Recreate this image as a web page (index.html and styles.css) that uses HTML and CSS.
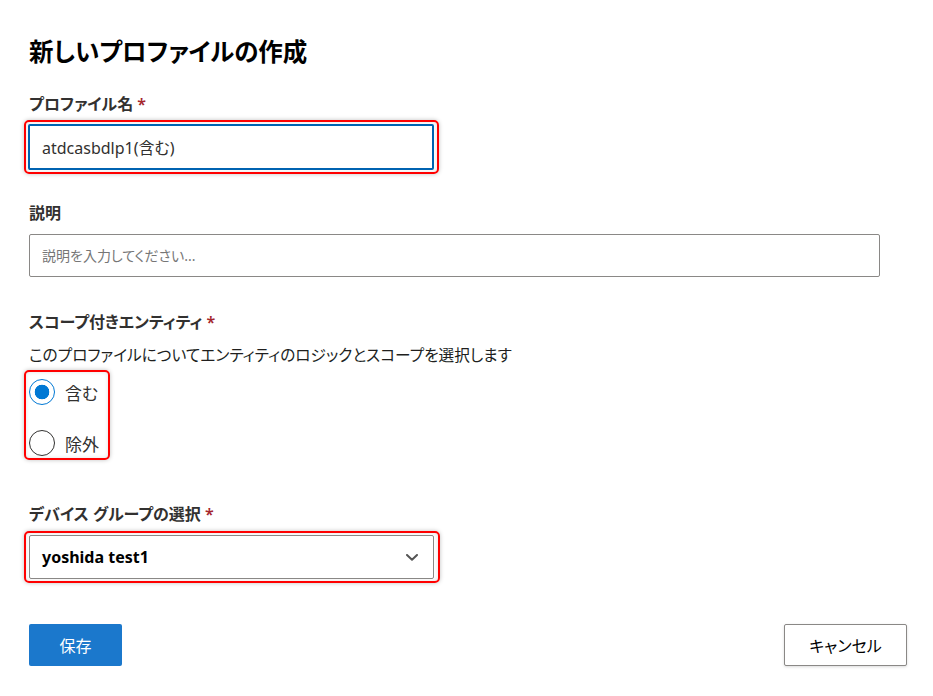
FILE: index.html
```html
<!DOCTYPE html>
<html lang="ja">
<head>
  <meta charset="UTF-8">
  <meta name="viewport" content="width=device-width, initial-scale=1">
  <title>新しいプロファイルの作成</title>
  <link rel="stylesheet" href="styles.css">
</head>
<body>
  <div class="panel">
    <h1>新しいプロファイルの作成</h1>

    <!-- プロファイル名 -->
    <label class="label label-name" for="profileName">プロファイル名 <span class="req">*</span></label>
    <div class="mark mark-name">
      <input id="profileName" class="text-input focused" type="text" value="atdcasbdlp1(含む)">
    </div>

    <!-- 説明 -->
    <label class="label label-desc" for="description">説明</label>
    <input id="description" class="text-input desc-input" type="text" placeholder="説明を入力してください...">

    <!-- スコープ -->
    <div class="label label-scope">スコープ付きエンティティ <span class="req">*</span></div>
    <p class="hint">このプロファイルについてエンティティのロジックとスコープを選択します</p>
    <div class="mark mark-radios">
      <label class="radio-row">
        <input type="radio" name="scope" value="include" checked>
        <span>含む</span>
      </label>
      <label class="radio-row">
        <input type="radio" name="scope" value="exclude">
        <span>除外</span>
      </label>
    </div>

    <!-- デバイス グループ -->
    <div class="label label-group">デバイス グループの選択 <span class="req">*</span></div>
    <div class="mark mark-select">
      <div class="dropdown">
        <span class="dropdown-value">yoshida test1</span>
        <svg width="12" height="7" viewBox="0 0 12 7" aria-hidden="true">
          <path d="M1 1 L6 5.8 L11 1" fill="none" stroke="#555" stroke-width="2" stroke-linecap="round" stroke-linejoin="round"/>
        </svg>
      </div>
    </div>

    <div class="actions">
      <button class="btn btn-primary">保存</button>
      <button class="btn btn-default">キャンセル</button>
    </div>
  </div>
</body>
</html>
```

FILE: styles.css
```css
* { margin:0; padding:0; box-sizing:border-box; }
html, body { width:100%; height:100%; background:#fff; }
body {
  font-family:"Segoe UI", "Noto Sans", "Noto Sans CJK JP", sans-serif;
  font-feature-settings:"palt";
  color:#323130;
  font-size:16px;
}

.panel {
  padding:36px 26px 0 29px;
}

h1 {
  font-size:24.5px;
  line-height:32px;
  font-weight:700;
  color:#000;
}

.label {
  display:block;
  font-size:16px;
  line-height:22px;
  font-weight:600;
  color:#323130;
}
.label-name  { margin-top:25px; }
.label-desc  { margin-top:28px; }
.label-scope { margin-top:34px; }
.label-group { margin-top:43px; }
.req { color:#a4262c; }

/* red annotation frames */
.mark {
  border:2px solid #f00;
  border-radius:5px;
  box-shadow:0 0 4px rgba(0,0,0,0.25), inset 0 0 4px rgba(0,0,0,0.12);
  margin-left:-5px;
}
.mark-name {
  width:415px;
  padding:2px 3px 2px 2px;
  margin-top:5px;
}
.mark-radios {
  display:inline-flex;
  flex-direction:column;
  gap:21px;
  padding:5px 9px 0 3px;
  margin-top:4px;
}
.mark-select {
  width:416px;
  padding:2px 3px;
  margin-top:6px;
}

.text-input {
  display:block;
  font:inherit;
  font-feature-settings:"palt";
  color:#323130;
  background:#fff;
  border:1px solid #8a8886;
  border-radius:2px;
  padding:0 12px;
  outline:none;
}
.focused {
  width:406px;
  height:46px;
  border:2px solid #0063b1;
}
.desc-input {
  width:851px;
  height:43px;
  margin-top:10px;
  font-size:14px;
  padding-left:12px;
}
.desc-input::placeholder { color:#767676; }

.hint {
  margin-top:11px;
  font-size:15.7px;
  line-height:22px;
  color:#201f1e;
}

.radio-row {
  display:flex;
  align-items:center;
  gap:10px;
  height:30px;
  font-size:17px;
  color:#323130;
  cursor:pointer;
}
.radio-row input {
  appearance:none;
  -webkit-appearance:none;
  width:26px;
  height:26px;
  border:1px solid #323130;
  border-radius:50%;
  background:#fff;
  margin:0;
}
.radio-row input:checked {
  border-color:#0078d4;
  background:radial-gradient(circle, #0078d4 0 7px, #fff 7.6px);
}

.dropdown {
  display:flex;
  align-items:center;
  justify-content:space-between;
  width:405px;
  height:44px;
  border:1px solid #8a8886;
  border-radius:2px;
  padding:0 15px 0 12px;
  background:#fff;
}
.dropdown-value {
  font-weight:700;
  color:#000;
}

.actions {
  display:flex;
  justify-content:space-between;
  margin-top:41px;
}
.btn {
  height:42px;
  font:inherit;
  font-feature-settings:"palt";
  font-size:16px;
  border-radius:2px;
  cursor:pointer;
}
.btn-primary {
  width:93px;
  background:#1b78cc;
  color:#fff;
  border:none;
}
.btn-default {
  width:123px;
  background:#fff;
  color:#000;
  border:1px solid #8a8886;
  box-shadow:0 1px 3px rgba(0,0,0,0.15);
}
```
